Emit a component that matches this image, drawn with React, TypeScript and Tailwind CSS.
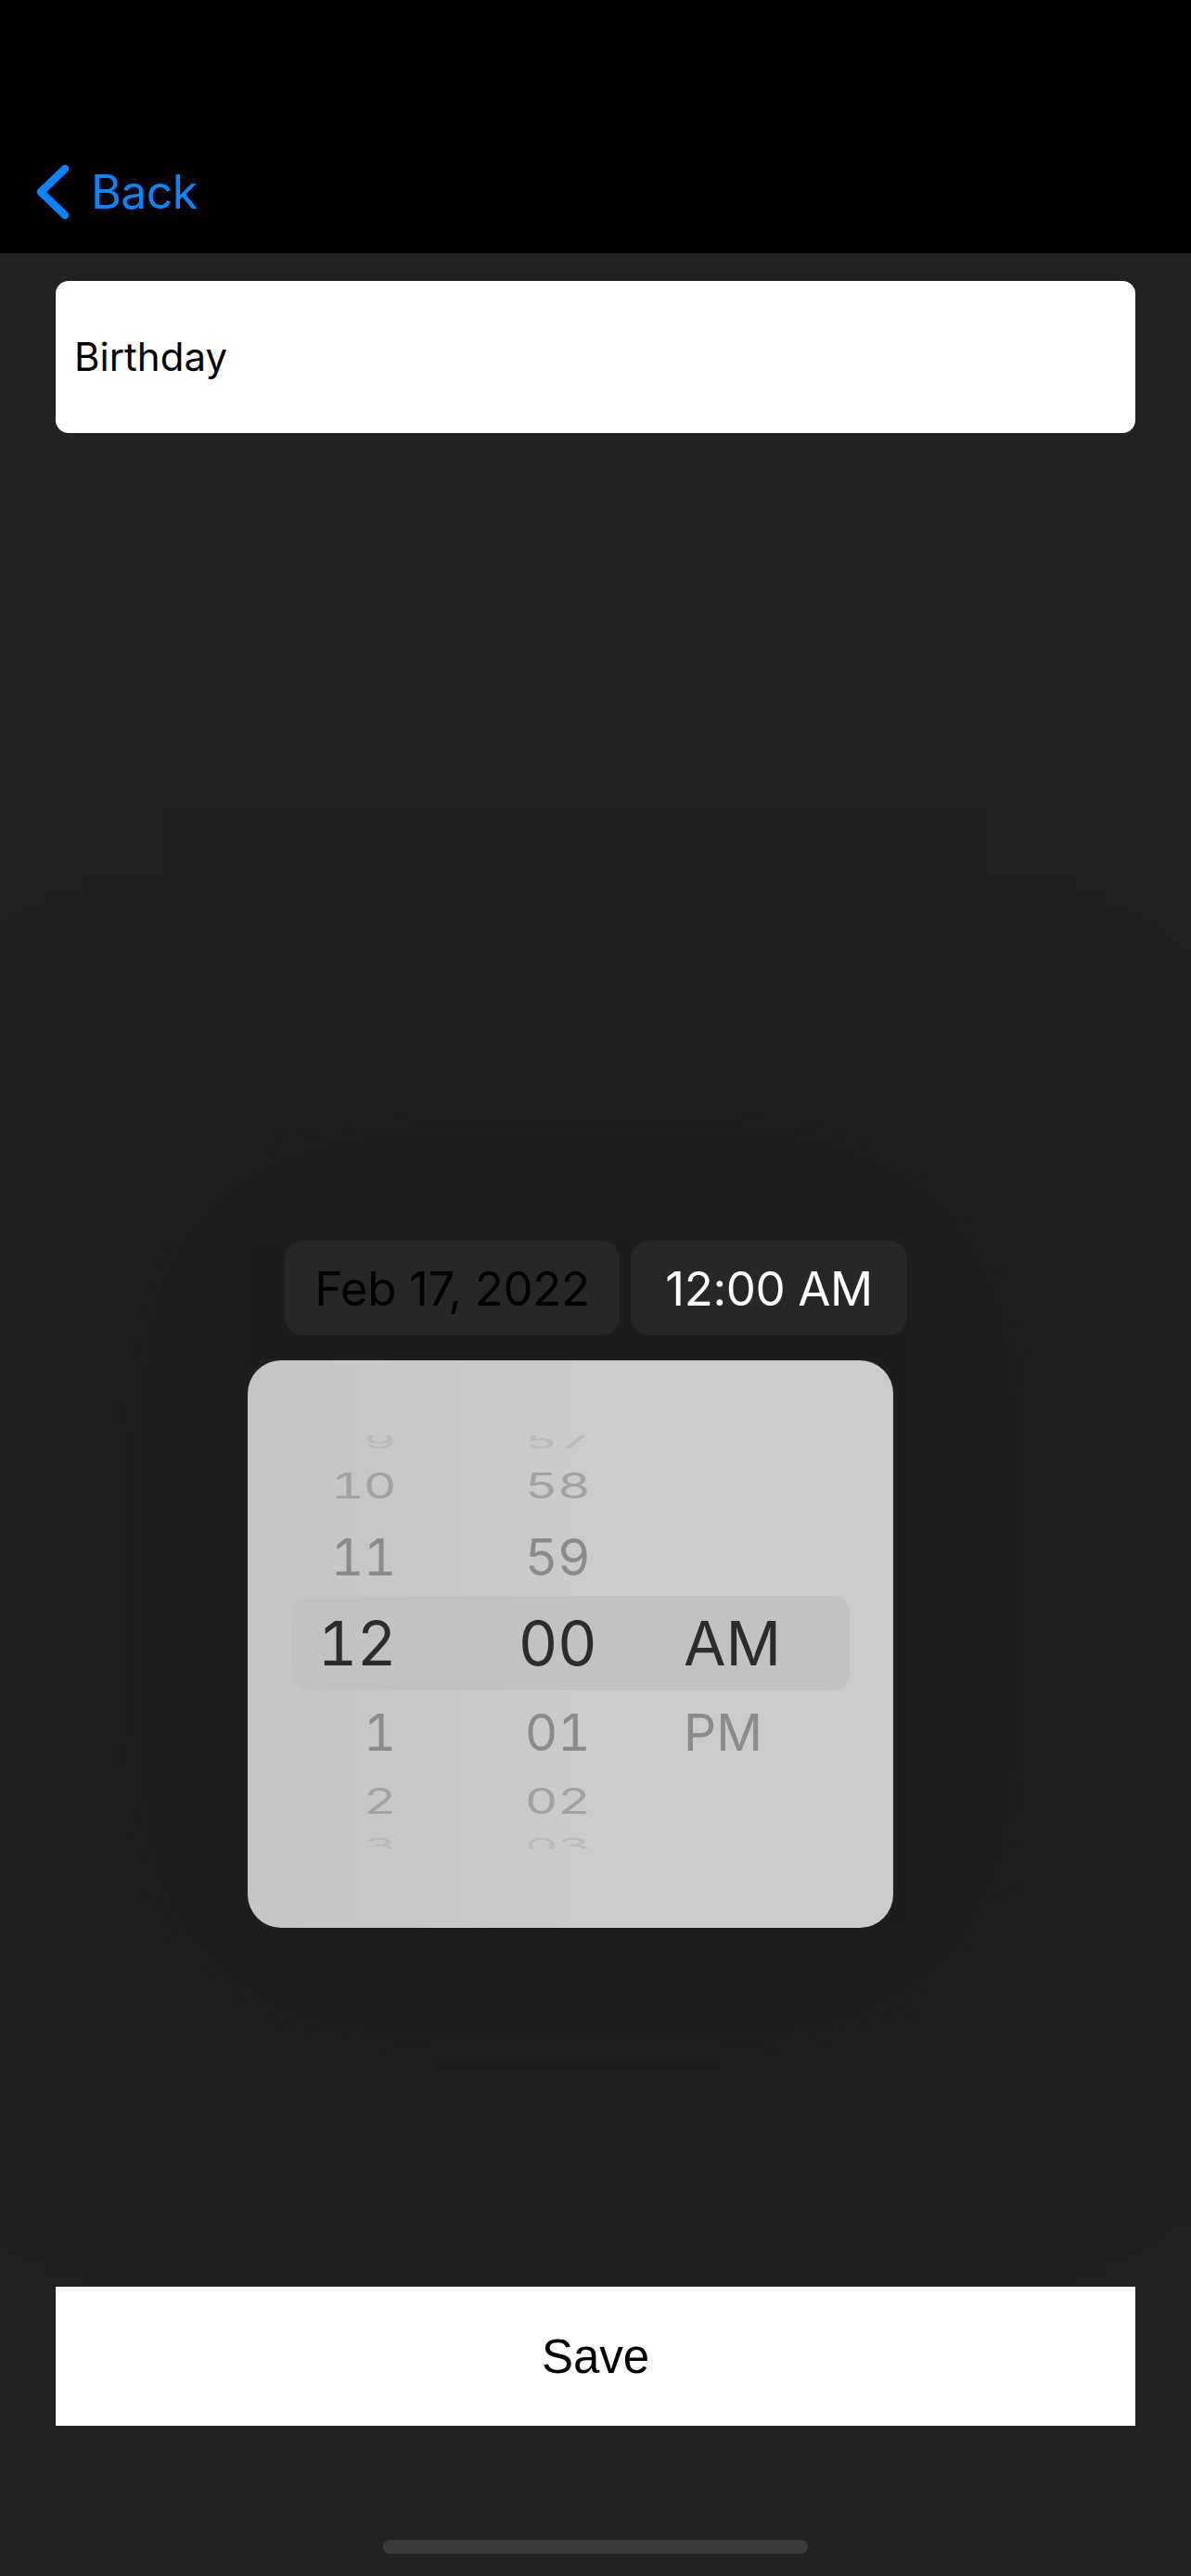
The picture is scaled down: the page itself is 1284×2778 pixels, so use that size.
import React from 'react';

interface WheelRow {
  hour: string;
  minute: string;
  period?: string;
  height: string;
  text: string;
}

// rows of the time wheel, from top (rolled away) to bottom
const rows: WheelRow[] = [
  { hour: '9', minute: '57', height: 'h-[28px]', text: 'text-[55px] text-[#bababa] scale-y-[0.38]' },
  { hour: '10', minute: '58', height: 'h-[68px]', text: 'text-[55px] text-[#a2a2a2] scale-y-[0.69]' },
  { hour: '11', minute: '59', height: 'h-[86px]', text: 'text-[55px] text-[#8b8b8b]' },
  { hour: '12', minute: '00', period: 'AM', height: 'h-[100px]', text: 'text-[66px] text-[#2c2c2c]' },
  { hour: '1', minute: '01', period: 'PM', height: 'h-[92px]', text: 'text-[55px] text-[#8b8b8b]' },
  { hour: '2', minute: '02', height: 'h-[56px]', text: 'text-[55px] text-[#a2a2a2] scale-y-[0.69]' },
  { hour: '3', minute: '03', height: 'h-[40px]', text: 'text-[55px] text-[#bababa] scale-y-[0.38]' },
];

const ChevronLeft: React.FC = () => (
  <svg width="40" height="62" viewBox="0 0 40 62" fill="none">
    <path d="M34 6 L8 31 L34 56" stroke="#0a84ff" strokeWidth="8.5" strokeLinecap="round" strokeLinejoin="round" />
  </svg>
);

const TimePicker: React.FC = () => {
  return (
    <div className="relative w-[696px] h-[612px] rounded-[36px] bg-gradient-to-r from-[#c5c5c5] via-[#cbcbcb] to-[#cbcbcb] overflow-hidden">
      {/* selection band */}
      <div className="absolute top-[254px] left-[48px] right-[47px] h-[102px] rounded-[18px] bg-[#c2c2c2]" />

      <div className="relative mt-[81px] h-[446px] overflow-hidden">
        <div className="-mt-[8px] flex flex-col">
          {rows.map((row, i) => (
            <div key={i} className={`flex items-center ${row.height}`}>
              <div className={`w-[160px] text-right leading-none tabular-nums tracking-[-0.5px] ${row.text}`}>{row.hour}</div>
              <div className={`ml-[114px] w-[120px] text-center leading-none tabular-nums tracking-[-0.5px] ${row.text}`}>{row.minute}</div>
              <div className={`ml-[76px] leading-none ${row.text}`}>{row.period ?? ''}</div>
            </div>
          ))}
        </div>
      </div>
    </div>
  );
};

const App: React.FC = () => {
  return (
    <div className="min-h-[2778px] w-full bg-[#222222] font-[Inter,sans-serif] flex flex-col overflow-hidden">
      {/* Nav bar */}
      <div className="h-[273px] bg-black">
        <div className="mt-[176px] ml-[36px] h-[62px] flex items-center">
          <ChevronLeft />
          <span className="ml-[22px] text-[50px] leading-none tracking-[-0.5px] text-[#0a84ff]">Back</span>
        </div>
      </div>

      <div className="px-[60px] flex flex-col">
        {/* Title input */}
        <div className="mt-[30px] h-[164px] rounded-[14px] bg-white flex items-center pl-[20px]">
          <span className="text-[42px] leading-none text-black">Birthday</span>
        </div>

        {/* Date / time popover */}
        <div className="mt-[871px] ml-[207px] w-[711px] bg-[#1c1d1c] shadow-[0_0_340px_90px_#1c1d1c] flex flex-col">
          <div className="pl-[40px] flex gap-[12px]">
            <div className="w-[361px] h-[102px] rounded-[20px] bg-[#262727] flex items-center justify-center">
              <span className="text-[51px] leading-none tracking-[-0.4px] text-black">Feb 17, 2022</span>
            </div>
            <div className="w-[298px] h-[102px] rounded-[20px] bg-[#262727] flex items-center justify-center">
              <span className="text-[51px] leading-none tracking-[-0.4px] text-white">12:00 AM</span>
            </div>
          </div>
          <div className="mt-[27px]">
            <TimePicker />
          </div>
        </div>

        {/* Save */}
        <div className="mt-[387px] h-[150px] bg-white flex items-center justify-center">
          <span className="font-['Liberation_Sans',Arial,sans-serif] text-[51px] leading-none text-black">Save</span>
        </div>
      </div>

      {/* Home indicator */}
      <div className="mt-[123px] mx-auto w-[458px] h-[15px] rounded-full bg-[#3b3b3b]" />
    </div>
  );
};

export default App;
